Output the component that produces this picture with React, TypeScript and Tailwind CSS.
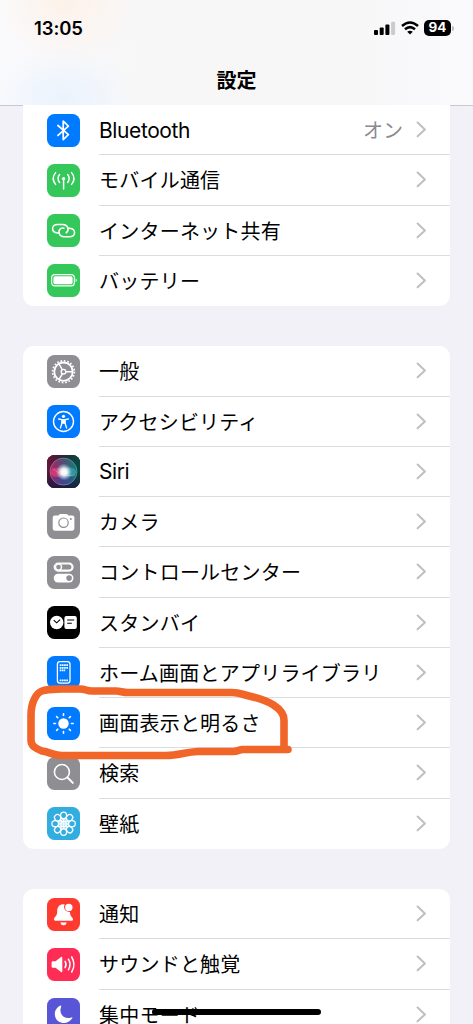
import type { ReactNode } from "react";

type Row = { label: string; tile: string; icon: ReactNode; value?: string };

const w = { stroke: "#fff", fill: "none", strokeLinecap: "round", strokeLinejoin: "round" } as const;

const Bluetooth = (
  <path {...w} strokeWidth="1.7" strokeLinecap="butt" d="M10.4 11 21.4 20.6 16.2 25.7V7.2L21.4 12.2 10.4 21.8" />
);

const Antenna = (
  <g {...w} strokeWidth="1.5">
    <circle cx="16.6" cy="14.6" r="1.7" fill="#fff" stroke="none" />
    <path d="M16.6 15V25M8.6 8.6Q3.8 14.5 8.6 20.4M12.6 10.6Q9.4 14.5 12.6 18.4M20.6 10.6Q23.8 14.5 20.6 18.4M24.6 8.6Q29.4 14.5 24.6 20.4" />
  </g>
);

const Hotspot = (
  <g {...w} strokeWidth="1.5">
    <path d="M12.2 19H10.5C3.8 18.4 4.2 10.6 10.6 10.6H16C20.8 10.6 22.8 16.2 19.2 18.8" />
    <path d="M20.8 14.3H22.6C29.4 15 29 22.8 22.5 22.8H17C12.2 22.8 10.2 17 13.9 14.4C15 13.8 16 13.8 17 14.2" />
  </g>
);

const Battery = (
  <g>
    <rect x="4.7" y="10.6" width="22.6" height="11.3" rx="3" fill="none" stroke="#fff" strokeWidth="1.1" />
    <rect x="6.4" y="12.3" width="19.2" height="7.9" rx="1.6" fill="#fff" />
    <path d="M28.6 14.3Q31 16.2 28.6 18.2Z" fill="#fff" />
  </g>
);

const Gear = (
  <g {...w}>
    <circle cx="16.5" cy="16.7" r="9.2" strokeWidth="1.8" />
    <circle cx="16.5" cy="16.7" r="10.9" strokeWidth="1.7" strokeDasharray="1.7 1.725" strokeLinecap="butt" />
    <circle cx="16.5" cy="16.7" r="2.3" strokeWidth="1.4" />
    <path strokeWidth="1.5" d="M18.8 16.7H25.4M15.3 14.6 12.1 9M15.3 18.8 12.1 24.4" />
  </g>
);

const Accessibility = (
  <g {...w}>
    <circle cx="16.5" cy="16.5" r="10" strokeWidth="1.4" />
    <circle cx="16.5" cy="11.3" r="1.6" fill="#fff" stroke="none" />
    <path strokeWidth="1.3" d="M11.6 14 15 14.7V18L13.4 23M21.4 14 18 14.7V18L19.6 23" />
    <path fill="#fff" stroke="none" d="M14.4 14.1H18.6V18.8H14.4Z" />
  </g>
);

const Siri = (
  <g>
    <defs>
      <linearGradient id="siriBg" x1="0" y1="0.1" x2="1" y2="0.2">
        <stop offset="0" stopColor="#6d1238" />
        <stop offset=".48" stopColor="#282638" />
        <stop offset="1" stopColor="#064b43" />
      </linearGradient>
      <linearGradient id="siriBall" x1="0" y1="0.5" x2="1" y2="0.4">
        <stop offset="0" stopColor="#d51c68" />
        <stop offset=".45" stopColor="#695080" />
        <stop offset="1" stopColor="#118c82" />
      </linearGradient>
      <linearGradient id="siriShade" x1="0" y1="0" x2="0" y2="1">
        <stop offset=".45" stopColor="#17193d" stopOpacity="0" />
        <stop offset="1" stopColor="#211548" stopOpacity=".8" />
      </linearGradient>
      <radialGradient id="siriGlow">
        <stop offset="0" stopColor="#fff" />
        <stop offset=".4" stopColor="#fff" stopOpacity=".9" />
        <stop offset="1" stopColor="#bfeaff" stopOpacity="0" />
      </radialGradient>
    </defs>
    <rect width="33" height="33" fill="url(#siriBg)" />
    <rect width="33" height="33" fill="url(#siriShade)" />
    <circle cx="16.5" cy="16.6" r="13.5" fill="url(#siriBall)" fillOpacity=".8" stroke="#8fb0b8" strokeOpacity=".75" strokeWidth=".7" />
    <ellipse cx="16.5" cy="24.5" rx="10" ry="4.5" fill="#2949a5" fillOpacity=".45" />
    <ellipse cx="10" cy="17.5" rx="6.5" ry="4.5" fill="#f0437e" fillOpacity=".6" />
    <ellipse cx="22.5" cy="17" rx="6.5" ry="4.5" fill="#3dc0d3" fillOpacity=".5" />
    <ellipse cx="17" cy="17" rx="8" ry="8.5" transform="rotate(-18 17 17)" fill="url(#siriGlow)" />
    <path d="M5 13Q16 23 28 20" fill="none" stroke="#fff" strokeOpacity=".35" strokeWidth=".6" />
  </g>
);

const Camera = (
  <g>
    <path fill="#fff" d="M7.7 9.5H11.2C12.2 9.5 12 7.9 13.4 7.9H19.4C20.8 7.9 20.7 9.5 21.8 9.5H25.3Q27.4 9.5 27.4 11.6V22.6Q27.4 24.7 25.3 24.7H7.7Q5.7 24.7 5.7 22.6V11.6Q5.7 9.5 7.7 9.5Z" />
    <circle cx="16.5" cy="16.7" r="4.7" fill="none" stroke="#8e8e93" strokeWidth="1.2" />
    <circle cx="23.9" cy="12.9" r="1" fill="#8e8e93" />
  </g>
);

const Controls = (
  <g>
    <rect x="7.2" y="7.2" width="18.8" height="7.8" rx="3.9" fill="#8e8e93" stroke="#fff" strokeWidth="1.3" />
    <path d="M11 7.2H22A3.9 3.9 0 0 1 22 15H11Z" fill="#fff" />
    <circle cx="11.5" cy="11.1" r="3" fill="#8e8e93" stroke="#fff" strokeWidth="1.4" />
    <path d="M14.2 8.6H22A2.5 2.5 0 0 1 22 13.6H14.2Q16.4 11.1 14.2 8.6Z" fill="#8e8e93" />
    <rect x="6.7" y="17.8" width="19.8" height="8.6" rx="4.3" fill="#fff" />
    <circle cx="22.1" cy="22.1" r="2.8" fill="#8e8e93" />
  </g>
);

const StandBy = (
  <g>
    <circle cx="9.7" cy="16.5" r="6.7" fill="#fff" />
    <path d="M6.8 14.2 9.6 16.8 13.2 13.6" fill="none" stroke="#000" strokeWidth="1.1" />
    <rect x="17.4" y="10.1" width="12.4" height="12.8" rx="2" fill="#fff" />
    <path d="M20.2 14H27.2M20.2 17.2H24.8" stroke="#000" strokeWidth="1.1" />
  </g>
);

const HomeScreen = (
  <g>
    <rect x="10.4" y="5.6" width="12.6" height="21.6" rx="2.6" fill="none" stroke="#fff" strokeWidth="1.3" />
    <path d="M12.7 9.2H21M12.7 11.8H21M12.7 14.4H18.2M12.7 24.4H21" stroke="#fff" strokeWidth="1.7" strokeDasharray="1.7 .5" />
  </g>
);

const Sun = (
  <g {...w}>
    <circle cx="16.5" cy="16.5" r="5.2" fill="#fff" stroke="none" />
    <path
      strokeWidth="1.6"
      d="M16.5 6.8V8.5M16.5 24.5V26.2M6.8 16.5H8.5M24.5 16.5H26.2M9.6 9.6 10.8 10.8M22.2 22.2 23.4 23.4M9.6 23.4 10.8 22.2M22.2 10.8 23.4 9.6"
    />
  </g>
);

const Search = (
  <g {...w}>
    <circle cx="14.9" cy="15" r="7.5" strokeWidth="1.6" />
    <path strokeWidth="2" d="M20.5 20.5 25.8 25.9" />
  </g>
);

const Flower = (
  <g {...w} strokeWidth="1.25">
    {[0, 45, 90, 135, 180, 225, 270, 315].map((a) => (
      <g key={a} transform={`rotate(${a} 16.6 16.7)`}>
        <ellipse cx="16.6" cy="8.3" rx="3" ry="3.3" />
        <path d="M16.6 11.6V16.7M14.8 10.9 16.6 14.5 18.4 10.9" strokeWidth=".9" />
      </g>
    ))}
    <circle cx="16.6" cy="16.7" r="2.7" />
  </g>
);

const Bell = (
  <g>
    <path fill="#fff" d="M16 6.2C11.5 6.4 10.2 10 10.2 13.8C10.2 18.2 7.3 19 6.9 21.3Q6.8 22.7 8.3 22.7H24.8Q26.4 22.7 26.1 21.3C25.7 19 23 18.2 22.9 13.9Q17.6 14 17 9Q17 7.4 17.8 6.4ZM13.2 24.4H19.8Q18.9 27.2 16.5 27.2T13.2 24.4Z" />
    <circle cx="21.8" cy="9.4" r="3.7" fill="#fff" />
  </g>
);

const Speaker = (
  <g {...w}>
    <path fill="#fff" stroke="none" d="M5.8 13.2H8.6L14 8.9Q15.3 8.3 15.3 9.8V23.3Q15.3 24.8 14 24.1L8.6 19.8H5.8Q4.6 19.8 4.6 18.6V14.4Q4.6 13.2 5.8 13.2Z" />
    <path strokeWidth="1.5" d="M18.1 13.4Q20 16.5 18.1 19.6M21.4 11.2Q24.7 16.5 21.4 21.8M24.7 9Q29.2 16.5 24.7 24" />
  </g>
);

const Moon = (
  <path fill="#fff" d="M13.1 7.7Q14.7 6.9 14.2 8.6C11.3 15.6 17 22 24.4 19.4Q26 18.9 25.2 20.3C20.2 28.5 7.8 25.4 7.8 16.1C7.8 12 10.3 9 13.1 7.7Z" />
);

const groups: Row[][] = [
  [
    { label: "Bluetooth", tile: "bg-[#007aff]", icon: Bluetooth, value: "オン" },
    { label: "モバイル通信", tile: "bg-[#34c759]", icon: Antenna },
    { label: "インターネット共有", tile: "bg-[#34c759]", icon: Hotspot },
    { label: "バッテリー", tile: "bg-[#34c759]", icon: Battery },
  ],
  [
    { label: "一般", tile: "bg-[#8e8e93]", icon: Gear },
    { label: "アクセシビリティ", tile: "bg-[#007aff]", icon: Accessibility },
    { label: "Siri", tile: "bg-black", icon: Siri },
    { label: "カメラ", tile: "bg-[#8e8e93]", icon: Camera },
    { label: "コントロールセンター", tile: "bg-[#8e8e93]", icon: Controls },
    { label: "スタンバイ", tile: "bg-black", icon: StandBy },
    { label: "ホーム画面とアプリライブラリ", tile: "bg-[#007aff]", icon: HomeScreen },
    { label: "画面表示と明るさ", tile: "bg-[#007aff]", icon: Sun },
    { label: "検索", tile: "bg-[#8e8e93]", icon: Search },
    { label: "壁紙", tile: "bg-[#32ade0]", icon: Flower },
  ],
  [
    { label: "通知", tile: "bg-[#ff3b30]", icon: Bell },
    { label: "サウンドと触覚", tile: "bg-[#ff2d55]", icon: Speaker },
    { label: "集中モード", tile: "bg-[#5856d6]", icon: Moon },
  ],
];

function SettingsRow({ row, last }: { row: Row; last: boolean }) {
  const latin = /^[A-Za-z]+$/.test(row.label);
  return (
    <li className="flex h-[50.25px] items-center pl-6">
      <span className={`size-[33px] shrink-0 overflow-hidden rounded-[7.5px] ${row.tile}`}>
        <svg viewBox="0 0 33 33" className="size-full">{row.icon}</svg>
      </span>
      <div className={`ml-[19px] flex h-full flex-1 items-center border-b pr-[23px] ${last ? "border-transparent" : "border-[#dcdce0]"}`}>
        <span
          className={`flex-1 whitespace-nowrap leading-none ${latin ? "pt-px text-[21px] tracking-[-0.4px]" : "pt-[3px] text-[20px] tracking-[0.22px]"}`}
        >
          {row.label}
        </span>
        {row.value && <span className="mr-[13px] pt-[3px] text-[20px] leading-none text-[#8a8a8e]">{row.value}</span>}
        <svg viewBox="0 0 11 17" className="h-[17px] w-[11px]">
          <path d="M1.6 1.5 8.9 8.4 1.6 15.3" fill="none" stroke="#c0c0c4" strokeWidth="2.1" strokeLinecap="round" strokeLinejoin="round" />
        </svg>
      </div>
    </li>
  );
}

export default function App() {
  return (
    <main className="relative flex h-[1024px] w-[473px] flex-col overflow-hidden bg-[#f2f1f8] font-['Inter','Noto_Sans_CJK_JP',sans-serif] text-black">
      <header className="flex h-[106px] shrink-0 flex-col border-b border-[#c9c9cc] bg-[#f7f7f8] bg-[radial-gradient(ellipse_75px_65px_at_66px_2px,#fdf2e9,transparent),radial-gradient(ellipse_75px_50px_at_64px_98px,#eaf3fd,transparent),linear-gradient(90deg,#fafafd,#f7f7f7_35%,#f7f7f8_75%,#fafafd)]">
        <div className="flex h-[56px] items-center justify-between pl-[34px] pr-[19px]">
          <time className="pt-px text-[18.5px] font-semibold leading-none tracking-[-0.1px]">13:05</time>
          <div className="flex items-center gap-[5px]">
            <svg viewBox="0 0 22 14" className="h-[14px] w-[22px]">
              <rect x="0" y="9" width="4" height="5" rx="1" />
              <rect x="5.7" y="6.5" width="4" height="7.5" rx="1" />
              <rect x="11.4" y="3.5" width="4" height="10.5" rx="1" />
              <rect x="17.1" y=".7" width="4" height="13.3" rx="1" fill="#cbcbcd" />
            </svg>
            <svg viewBox="0 0 18 14" className="h-[14px] w-[18px]">
              <path d="M1 5Q9-2 17 5M4 8.3Q9 4 14 8.3" fill="none" stroke="#000" strokeWidth="2.5" />
              <path d="M6.2 10.8Q9 8.6 11.8 10.8L9 13.6Z" />
            </svg>
            <div className="flex items-center gap-px">
              <span className="flex h-[16px] w-[27px] items-center justify-center rounded-[5px] bg-black text-[13.5px] font-bold leading-none text-white">94</span>
              <span className="h-[5px] w-[2px] rounded-r-full bg-[#bdbdc0]" />
            </div>
          </div>
        </div>
        <h1 className="mt-[14.5px] text-center text-[20px] font-bold leading-[20px]">設定</h1>
      </header>
      <div className="flex flex-col gap-[40.25px] px-[23px]">
        {groups.map((rows, g) => (
          <ul key={g} className={`shrink-0 bg-white ${g === 0 ? "-mt-px rounded-b-[11px]" : "rounded-[11px]"}`}>
            {rows.map((row, i) => (
              <SettingsRow key={row.label} row={row} last={i === rows.length - 1} />
            ))}
          </ul>
        ))}
      </div>
      <svg viewBox="0 0 473 1024" className="pointer-events-none absolute inset-0 h-[1024px] w-[473px]">
        <path
          d="M288 749.5H243C239 749.5 238 751.5 233 751.5H198C185 752 179 755.5 166 755.5H62C54 755.5 50 752 42 751C35 748 31 746 31 740V715C31 703 36 693 42 691C49 688.5 55 689.3 62 689H80C86 689 86 691 92 691H116C121 691 122 692.5 128 692.5H232C239 692.5 244 695 251 696.5C267 700 284 708 284 720V748"
          fill="none"
          stroke="#f26529"
          strokeWidth="7.6"
          strokeLinecap="round"
          strokeLinejoin="round"
        />
      </svg>
      <div className="absolute left-[152px] top-[1009px] h-[6px] w-[169px] rounded-full bg-black" />
    </main>
  );
}
